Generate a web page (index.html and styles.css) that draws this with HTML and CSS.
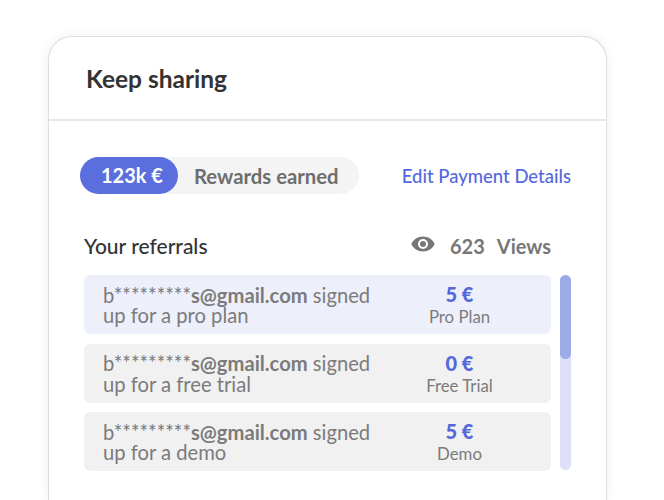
FILE: index.html
```html
<!DOCTYPE html>
<html lang="en">
<head>
    <meta charset="UTF-8">
    <meta name="viewport" content="width=device-width, initial-scale=1.0">
    <title>Keep sharing</title>
    <link rel="stylesheet" href="styles.css">
</head>
<body>
    <div class="card">
        <div class="card-header">
            <h1>Keep sharing</h1>
        </div>
        <div class="card-body">
            <div class="rewards-row">
                <div class="rewards-pill">
                    <span class="rewards-amount">123k €</span>
                    <span class="rewards-label">Rewards earned</span>
                </div>
                <a class="edit-link" href="#">Edit Payment Details</a>
            </div>
            <div class="referrals-head">
                <h2>Your referrals</h2>
                <div class="views">
                    <svg class="eye" width="24" height="16" viewBox="0 0 24 16">
                        <path fill-rule="evenodd" d="M12 0.5C6.6 0.5 2.2 3.6 0.3 8c1.9 4.4 6.3 7.5 11.7 7.5s9.8-3.1 11.7-7.5C21.8 3.6 17.4 0.5 12 0.5zM12 13a5 5 0 1 1 0-10 5 5 0 0 1 0 10zM12 5a3 3 0 1 0 0 6 3 3 0 0 0 0-6z"/>
                    </svg>
                    <span class="views-count">623</span>
                    <span>Views</span>
                </div>
            </div>
            <div class="referrals">
                <div class="list">
                    <div class="item active">
                        <p class="item-text">b*********<b>s@gmail.com</b> signed up for a pro plan</p>
                        <div class="item-value"><strong>5 €</strong><span>Pro Plan</span></div>
                    </div>
                    <div class="item">
                        <p class="item-text">b*********<b>s@gmail.com</b> signed up for a free trial</p>
                        <div class="item-value"><strong>0 €</strong><span>Free Trial</span></div>
                    </div>
                    <div class="item">
                        <p class="item-text">b*********<b>s@gmail.com</b> signed up for a demo</p>
                        <div class="item-value"><strong>5 €</strong><span>Demo</span></div>
                    </div>
                </div>
                <div class="scrollbar"><div class="thumb"></div></div>
            </div>
        </div>
    </div>
</body>
</html>
```

FILE: styles.css
```css
body {
    font-family: Lato, "Open Sans", sans-serif;
    background-color: #fff;
    margin: 0;
    padding: 36px 57px 0 48px;
    height: 464px;
    overflow: hidden;
}
.card {
    box-sizing: border-box;
    width: 559px;
    height: 464px;
    background-color: #fff;
    border: 1px solid #dedede;
    border-bottom: none;
    border-radius: 24px 24px 0 0;
    box-shadow: 0 0 12px rgba(0, 0, 0, 0.07);
}
.card-header {
    box-sizing: border-box;
    height: 84px;
    padding: 0 37px;
    display: flex;
    align-items: center;
    border-bottom: 2px solid #e8e8e8;
}
h1 {
    margin: 0;
    font-size: 24.500px;
    font-weight: 700;
    color: #333;
}
.card-body {
    padding: 36px 35px 0 31px;
}
.rewards-row {
    display: flex;
    align-items: center;
    justify-content: space-between;
}
.rewards-pill {
    display: flex;
    align-items: center;
    width: 279px;
    height: 37px;
    background-color: #f4f4f4;
    border-radius: 19px;
}
.rewards-amount {
    box-sizing: border-box;
    width: 98px;
    height: 37px;
    padding-left: 6px;
    line-height: 37px;
    text-align: center;
    background-color: #5b6ede;
    border-radius: 19px;
    color: #fff;
    font-size: 20px;
    font-weight: 700;
}
.rewards-label {
    margin-left: 16px;
    color: #6e6e6e;
    font-size: 20.300px;
    font-weight: 700;
}
.edit-link {
    color: #5468dc;
    font-size: 18.500px;
    font-weight: 500;
    text-decoration: none;
}
.referrals-head {
    display: flex;
    align-items: center;
    justify-content: space-between;
    height: 25px;
    margin: 39px 20px 17px 4px;
}
h2 {
    margin: 0;
    font-size: 21px;
    font-weight: 500;
    color: #333;
}
.views {
    display: flex;
    align-items: center;
    gap: 12px;
    color: #777;
    font-size: 20px;
    font-weight: 700;
}
.eye {
    fill: #777;
    margin-bottom: 3px;
}
.views-count {
    margin-left: 3px;
}
.referrals {
    display: flex;
    gap: 9px;
    margin-left: 4px;
}
.list {
    width: 467px;
    display: flex;
    flex-direction: column;
    gap: 9.500px;
}
.item {
    box-sizing: border-box;
    height: 59px;
    padding: 0 0 0 19px;
    display: flex;
    align-items: center;
    background-color: #f1f1f1;
    border-radius: 6px;
}
.item.active {
    background-color: #edf0fb;
}
.item-text {
    width: 290px;
    margin: 1px 0 0;
    font-size: 20.200px;
    line-height: 20.500px;
    color: #7b7b7b;
}
.item-text b {
    font-weight: 700;
}
.item-value {
    flex: 1;
    display: flex;
    flex-direction: column;
    align-items: center;
    padding: 1px 25px 0 0;
    color: #7b7b7b;
    font-size: 16.800px;
    line-height: 21px;
}
.item-value strong {
    color: #5468dc;
    font-size: 20px;
    line-height: 23px;
    font-weight: 900;
}
.scrollbar {
    width: 11px;
    height: 195px;
    background-color: #dde0f7;
    border-radius: 6px;
}
.thumb {
    height: 84px;
    background-color: #9daae8;
    border-radius: 6px;
}
```
